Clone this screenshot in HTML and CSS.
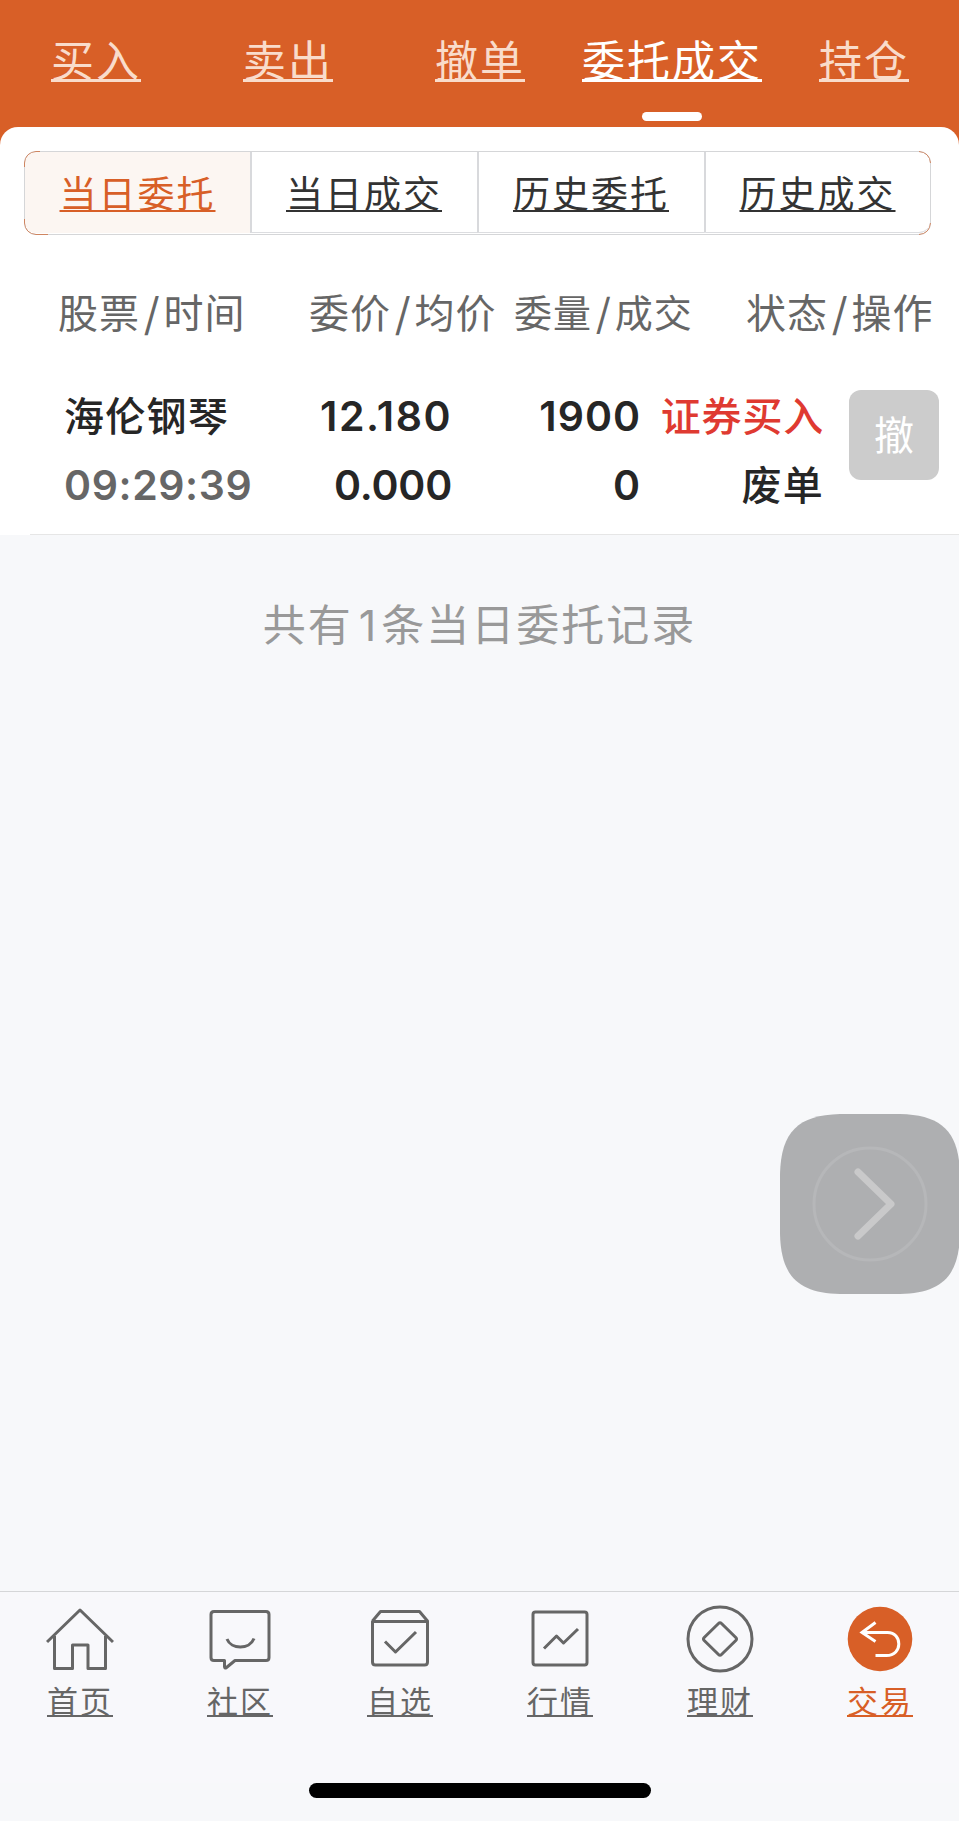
FILE: index.html
```html
<!DOCTYPE html>
<html lang="zh-CN">
<head>
    <meta charset="UTF-8">
    <meta name="viewport" content="width=device-width, initial-scale=1.0">
    <title>委托成交</title>
    <link rel="stylesheet" href="styles.css">
</head>
<body>
    <nav class="top-nav">
        <a class="top-tab" href="#">买入</a>
        <a class="top-tab" href="#">卖出</a>
        <a class="top-tab" href="#">撤单</a>
        <a class="top-tab active" href="#">委托成交</a>
        <a class="top-tab" href="#">持仓</a>
    </nav>

    <main class="content">
        <section class="panel">
            <div class="segment">
                <a class="segment-item active" href="#">当日委托</a>
                <a class="segment-item" href="#">当日成交</a>
                <a class="segment-item" href="#">历史委托</a>
                <a class="segment-item" href="#">历史成交</a>
            </div>

            <div class="list-head">
                <span>股票<i>/</i>时间</span>
                <span>委价<i>/</i>均价</span>
                <span class="narrow">委量<i>/</i>成交</span>
                <span>状态<i>/</i>操作</span>
            </div>

            <div class="order">
                <div class="order-col left">
                    <span>海伦钢琴</span>
                    <span class="num time">09:29:39</span>
                </div>
                <div class="order-col">
                    <span class="num price">12.180</span>
                    <span class="num avg">0.000</span>
                </div>
                <div class="order-col">
                    <span class="num">1900</span>
                    <span class="num">0</span>
                </div>
                <div class="order-col">
                    <span class="buy">证券买入</span>
                    <span>废单</span>
                </div>
                <button class="cancel-btn">撤</button>
            </div>
        </section>

        <p class="summary">共有<span class="count">1</span>条当日委托记录</p>
    </main>

    <!-- 悬浮按钮 -->
    <div class="float-btn">
        <svg width="180" height="180" viewBox="0 0 180 180" fill="none">
            <path d="M0 60C1 18 18 1 60 0H120C162 1 179 18 180 60V120C179 162 162 179 120 180H60C18 179 1 162 0 120Z" fill="#aeafb1"/>
            <circle cx="90" cy="90" r="56" stroke="#b6b7b9" stroke-width="3"/>
            <path d="M78 58L111 90L78 122" stroke="#c9c9ca" stroke-width="7" stroke-linecap="round" stroke-linejoin="round"/>
        </svg>
    </div>

    <nav class="bottom-nav">
        <a class="nav-item" href="#">
            <svg class="icon" viewBox="0 0 68 68">
                <path d="M1 37L34 5L67 37M8.500 31V63.500H26.500V40H42V63.500H59.500V31"/>
            </svg>
            <span>首页</span>
        </a>
        <a class="nav-item" href="#">
            <svg class="icon" viewBox="0 0 68 68">
                <path d="M8 6.500H60Q63 6.500 63 9.500V52.500Q63 55.500 60 55.500H29L20.500 62.500Q18.500 64 18.500 61.500V55.500H8Q5 55.500 5 52.500V9.500Q5 6.500 8 6.500Z"/>
                <path d="M21 34C25 44.500 43.500 45 48 33.500"/>
            </svg>
            <span>社区</span>
        </a>
        <a class="nav-item" href="#">
            <svg class="icon" viewBox="0 0 68 68">
                <path d="M6.500 16L14.500 6.500H53.500L61.500 16V57Q61.500 60 58.500 60H9.500Q6.500 60 6.500 57V16.500H61.500"/>
                <path d="M19 36.500L29.500 47L50 27"/>
            </svg>
            <span>自选</span>
        </a>
        <a class="nav-item" href="#">
            <svg class="icon" viewBox="0 0 68 68">
                <rect x="7" y="7" width="54" height="53" rx="2.500"/>
                <path d="M18 43.500L30.500 31L37.500 38L52 24"/>
            </svg>
            <span>行情</span>
        </a>
        <a class="nav-item" href="#">
            <svg class="icon" viewBox="0 0 68 68">
                <circle cx="34" cy="34" r="32"/>
                <path d="M32.500 18.500Q34 17 35.500 18.500L49.800 32.500Q51.200 34 49.800 35.500L35.500 49.500Q34 51 32.500 49.500L18.200 35.500Q16.800 34 18.200 32.500Z"/>
            </svg>
            <span>理财</span>
        </a>
        <a class="nav-item active" href="#">
            <svg class="icon" viewBox="0 0 68 68">
                <circle class="disc" cx="34" cy="34" r="32.300"/>
                <path class="arrow" d="M29.500 17.500L16 27.500L29.500 36.500M16 27.500H41.500C56.500 27.500 57 50.500 40.500 50.500H29.500"/>
            </svg>
            <span>交易</span>
        </a>
    </nav>
    <div class="home-bar"></div>
</body>
</html>
```

FILE: styles.css
```css
* {
    box-sizing: border-box;
}
body {
    margin: 0;
    height: 1821px;
    display: flex;
    flex-direction: column;
    background: #f7f8fa;
    font-family: "Noto Sans CJK SC", sans-serif;
    color: #262626;
    overflow: hidden;
}
a {
    color: inherit;
    text-decoration: underline;
    text-decoration-skip-ink: none;
}

/* 顶部导航 */
.top-nav {
    display: grid;
    grid-template-columns: repeat(5, 192px);
    height: 151px;
    flex: none;
    padding-top: 28px;
    background: #d85f27;
}
.top-tab {
    position: relative;
    line-height: 60px;
    text-align: center;
    font-size: 43px;
    letter-spacing: 2px;
    color: #f9dccb;
    text-decoration-thickness: 3px;
    text-underline-offset: 2px;
}
.top-tab.active {
    color: #fff;
}
.top-tab.active::after {
    content: "";
    position: absolute;
    left: 50%;
    top: 84px;
    width: 60px;
    height: 9px;
    margin-left: -30px;
    border-radius: 5px;
    background: #fff;
}

.content {
    flex: 1;
    margin-top: -24px;
}
.panel {
    position: relative;
    height: 408px;
    padding: 24px 0 0;
    border-radius: 18px 18px 0 0;
    background: #fff;
}
.panel::after {
    content: "";
    position: absolute;
    left: 30px;
    right: 0;
    bottom: 0;
    height: 1px;
    background: #e6e6e6;
}

/* 分段切换 */
.segment {
    position: relative;
    display: grid;
    grid-template-columns: 225px 227px 227px 226px;
    width: 907px;
    height: 84px;
    margin-left: 24px;
    padding-bottom: 1px;
    border: 1px solid #d5d6d8;
    border-radius: 12px;
}
.segment::after {
    content: "";
    position: absolute;
    inset: -1px;
    border: 1.5px solid #cf8560;
    border-radius: 12px;
    pointer-events: none;
    -webkit-mask: linear-gradient(#000, #000) 0 0 / 16px 16px no-repeat,
        linear-gradient(#000, #000) 100% 0 / 12px 12px no-repeat,
        linear-gradient(#000, #000) 0 100% / 24px 16px no-repeat,
        linear-gradient(#000, #000) 100% 100% / 12px 12px no-repeat;
}
.segment-item {
    padding-right: 1px;
    line-height: 80px;
    text-align: center;
    font-size: 37px;
    letter-spacing: 2px;
    color: #333;
    border-bottom: 1px solid #dcdde0;
    border-left: 2px solid #d8d9dc;
    text-decoration-thickness: 2px;
    text-underline-offset: 2px;
}
.segment-item.active {
    padding: 0;
    color: #d85f27;
    background: #fcf6f2;
    border: none;
    border-radius: 11px 0 0 11px;
}
.segment-item:last-child {
    border-radius: 0 0 11px 0;
}

.list-head {
    display: grid;
    grid-template-columns: 251px 205px 232px 1fr;
    margin-top: 46px;
    padding-left: 58px;
    line-height: 60px;
    font-size: 40px;
    letter-spacing: 1px;
    color: #666;
    white-space: nowrap;
}
.list-head i {
    padding: 0 3px 0 4px;
    font-style: normal;
    font-weight: 500;
}
.list-head .narrow {
    font-size: 38px;
    letter-spacing: 1px;
}

/* 委托记录 */
.order {
    display: grid;
    grid-template-columns: 186px 202px 189px 183px 115px;
    margin-top: 39px;
    padding-left: 64px;
    font-size: 40px;
    font-weight: 500;
    letter-spacing: 1.3px;
}
.order-col {
    display: flex;
    flex-direction: column;
    align-items: flex-end;
    line-height: 69px;
    white-space: nowrap;
}
.order-col.left {
    align-items: flex-start;
}
.num {
    padding-top: 2px;
    margin-bottom: -2px;
    font-family: Inter, sans-serif;
    font-size: 41px;
    font-weight: 600;
    letter-spacing: 1px;
}
.time {
    color: #666;
    letter-spacing: 0.6px;
}
.price {
    letter-spacing: 1.5px;
}
.avg {
    letter-spacing: -0.2px;
}
.buy {
    color: #df3a31;
    letter-spacing: 0.8px;
}
.cancel-btn {
    justify-self: end;
    width: 90px;
    height: 90px;
    margin-top: 10px;
    padding: 0 0 4px;
    border: none;
    border-radius: 12px;
    background: #ccc;
    color: #fff;
    font-family: inherit;
    font-size: 40px;
}

.summary {
    margin: 57px 0 0;
    line-height: 60px;
    text-align: center;
    font-size: 43px;
    letter-spacing: 2px;
    color: #999;
}
.count {
    padding: 0 5px 0 6px;
    font-family: Inter, sans-serif;
    letter-spacing: 0;
}

.float-btn {
    position: absolute;
    left: 780px;
    top: 1114px;
    width: 179px;
    height: 180px;
    overflow: hidden;
}

/* 底部导航 */
.bottom-nav {
    display: grid;
    grid-template-columns: repeat(6, 160px);
    height: 192px;
    flex: none;
    padding-top: 13px;
    border-top: 1px solid #d5d6d8;
    background: #f8f8fb;
}
.nav-item {
    display: flex;
    flex-direction: column;
    align-items: center;
    color: #666;
    font-size: 31px;
    letter-spacing: 2px;
    line-height: 44px;
    text-decoration-thickness: 2px;
    text-underline-offset: 2px;
}
.icon {
    width: 68px;
    height: 68px;
    margin-bottom: 5px;
    fill: none;
    stroke: #666;
    stroke-width: 3;
    stroke-linejoin: round;
}
.nav-item.active {
    color: #d85f27;
}
.icon .disc {
    fill: #d85f27;
    stroke: none;
}
.icon .arrow {
    stroke: #fff;
    stroke-linejoin: miter;
}
.home-bar {
    width: 342px;
    height: 15px;
    flex: none;
    margin: 0 auto 23px;
    border-radius: 8px;
    background: #000;
}
```
